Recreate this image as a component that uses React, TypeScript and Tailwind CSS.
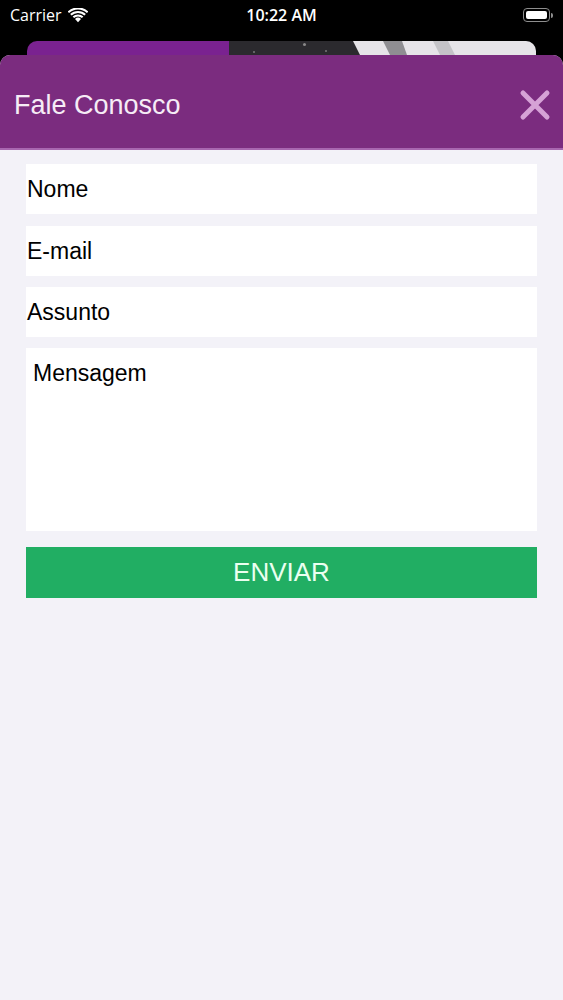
import React from "react";

function Wifi() {
  return (
    <svg width="20" height="15" viewBox="0 0 20 15">
      <path d="M10 14.2 L7 11 A4.3 4.3 0 0 1 13 11 Z" fill="white" />
      <path d="M4.6 8.6 A7.7 7.7 0 0 1 15.4 8.6 L13.9 10.1 A5.6 5.6 0 0 0 6.1 10.1 Z" fill="white" />
      <path d="M2.1 6.1 A11.3 11.3 0 0 1 17.9 6.1 L16.4 7.6 A9.2 9.2 0 0 0 3.6 7.6 Z" fill="white" />
      <path d="M-0.3 3.6 A14.8 14.8 0 0 1 20.3 3.6 L18.9 5 A12.8 12.8 0 0 0 1.1 5 Z" fill="white" />
    </svg>
  );
}

function Battery() {
  return (
    <div className="flex items-center">
      <div className="w-[27px] h-[14px] rounded-[4px] border border-[#8e8e8e] p-[2px]">
        <div className="w-full h-full bg-white rounded-[2px]" />
      </div>
      <div className="w-[2px] h-[5px] bg-[#8e8e8e] rounded-r-sm ml-[1px]" />
    </div>
  );
}

export default function App() {
  const font = { fontFamily: '"Liberation Sans", Arial, sans-serif' };
  return (
    <div className="w-[563px] h-[1000px] bg-black flex flex-col overflow-hidden" style={font}>
      {/* status bar */}
      <div className="h-[30px] relative flex items-center px-[10px] text-white">
        <div className="flex items-center gap-[6px]">
          <span className="text-[16px] leading-none" style={{ fontFamily: '"Open Sans", "Liberation Sans", sans-serif' }}>Carrier</span>
          <Wifi />
        </div>
        <span
          className="absolute left-0 right-0 text-center text-[16px] font-semibold leading-none"
          style={{ fontFamily: '"Open Sans", "Liberation Sans", sans-serif' }}
        >
          10:22 AM
        </span>
        <div className="ml-auto">
          <Battery />
        </div>
      </div>
      {/* background card */}
      <div className="h-[14px] mt-[11px] mx-[27px] rounded-t-[10px] overflow-hidden flex relative">
        <div className="w-[202px] bg-[#7a2290]" />
        <div className="flex-1 bg-[#2b2a2e] relative">
          <div className="absolute left-[74px] top-[2px] w-[3px] h-[3px] rounded-full bg-[#888]" />
          <div className="absolute left-[24px] top-[10px] w-[2px] h-[2px] rounded-full bg-[#777]" />
          <div className="absolute left-[96px] top-[9px] w-[2px] h-[2px] rounded-full bg-[#777]" />
        </div>
        <svg className="absolute right-0 top-0" width="183" height="14" viewBox="0 0 183 14">
          <polygon points="0,0 183,0 183,14 7,14" fill="#e6e4e8" />
          <polygon points="30,0 49,0 54,14 37,14" fill="#8f8e92" />
          <polygon points="80,0 95,0 102,14 87,14" fill="#c4c3c7" />
        </svg>
      </div>
      {/* sheet */}
      <div className="flex-1 rounded-t-[10px] overflow-hidden bg-[#f3f2f8] flex flex-col">
        <div className="h-[95px] bg-[#7b2c7f] flex items-center justify-between pl-[14px] pr-[12px] pt-[7px] border-b-[2px] border-[#a866b0]">
          <span className="text-[27px] text-[#f6ecf6]">Fale Conosco</span>
          <svg width="32" height="32" viewBox="0 0 32 32">
            <path d="M4 4 L28 28 M28 4 L4 28" stroke="#d6a2d6" strokeWidth="5" strokeLinecap="round" />
          </svg>
        </div>
        <div className="px-[26px] pt-[14px] flex flex-col">
          <div className="h-[50px] bg-white flex items-center pl-[1px] text-[23px] text-black">Nome</div>
          <div className="h-[50px] mt-[12px] bg-white flex items-center pl-[1px] text-[23px] text-black">E-mail</div>
          <div className="h-[50px] mt-[11px] bg-white flex items-center pl-[1px] text-[23px] text-black">Assunto</div>
          <div className="h-[183px] mt-[11px] bg-white pl-[7px] pt-[12px] text-[23px] text-black leading-[26px]">Mensagem</div>
          <div className="h-[51px] mt-[16px] bg-[#21ae63] flex items-center justify-center text-[26px] text-[#eafff0]">ENVIAR</div>
        </div>
      </div>
    </div>
  );
}
